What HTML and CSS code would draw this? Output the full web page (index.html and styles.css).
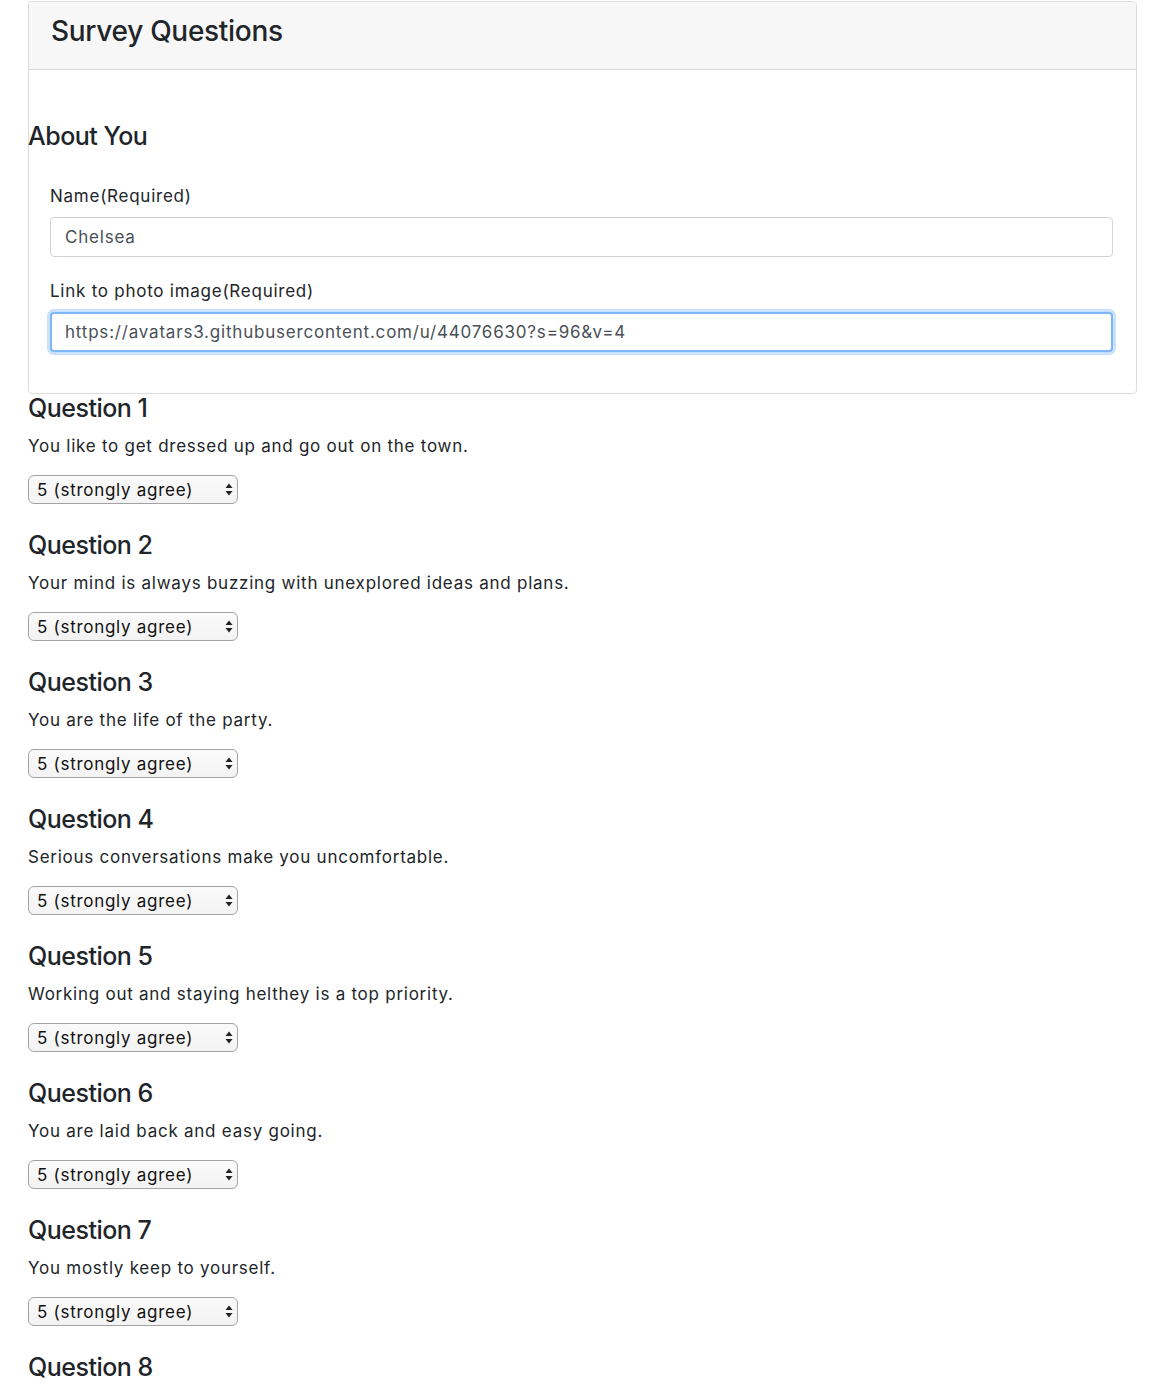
FILE: index.html
```html
<!DOCTYPE html>
<html lang="en">
<head>
<meta charset="utf-8">
<title>Survey Questions</title>
<link rel="stylesheet" href="styles.css">
</head>
<body>
<div class="page">
  <div class="card">
    <div class="card-header">
      <h3 class="card-title">Survey Questions</h3>
    </div>
    <div class="card-body">
      <h4 class="section-title">About You</h4>
      <div class="form-group">
        <label class="field-label" for="name">Name(Required)</label>
        <input class="field" id="name" type="text" value="Chelsea">
      </div>
      <div class="form-group">
        <label class="field-label" for="photo">Link to photo image(Required)</label>
        <input class="field field-focus" id="photo" type="text" value="https://avatars3.githubusercontent.com/u/44076630?s=96&amp;v=4">
      </div>
    </div>
  </div>

  <div class="question">
    <h4 class="q-title">Question 1</h4>
    <p class="q-text">You like to get dressed up and go out on the town.</p>
    <div class="q-select-row"><span class="select-wrap"><select class="q-select"><option>5 (strongly agree)</option></select><svg class="select-arrows" width="8" height="13" viewBox="0 0 8 13"><path d="M4 0.5 L7.5 5 L0.5 5 Z M4 12.5 L7.5 8 L0.5 8 Z" fill="#222"/></svg></span></div>
  </div>
  <div class="question">
    <h4 class="q-title">Question 2</h4>
    <p class="q-text">Your mind is always buzzing with unexplored ideas and plans.</p>
    <div class="q-select-row"><span class="select-wrap"><select class="q-select"><option>5 (strongly agree)</option></select><svg class="select-arrows" width="8" height="13" viewBox="0 0 8 13"><path d="M4 0.5 L7.5 5 L0.5 5 Z M4 12.5 L7.5 8 L0.5 8 Z" fill="#222"/></svg></span></div>
  </div>
  <div class="question">
    <h4 class="q-title">Question 3</h4>
    <p class="q-text">You are the life of the party.</p>
    <div class="q-select-row"><span class="select-wrap"><select class="q-select"><option>5 (strongly agree)</option></select><svg class="select-arrows" width="8" height="13" viewBox="0 0 8 13"><path d="M4 0.5 L7.5 5 L0.5 5 Z M4 12.5 L7.5 8 L0.5 8 Z" fill="#222"/></svg></span></div>
  </div>
  <div class="question">
    <h4 class="q-title">Question 4</h4>
    <p class="q-text">Serious conversations make you uncomfortable.</p>
    <div class="q-select-row"><span class="select-wrap"><select class="q-select"><option>5 (strongly agree)</option></select><svg class="select-arrows" width="8" height="13" viewBox="0 0 8 13"><path d="M4 0.5 L7.5 5 L0.5 5 Z M4 12.5 L7.5 8 L0.5 8 Z" fill="#222"/></svg></span></div>
  </div>
  <div class="question">
    <h4 class="q-title">Question 5</h4>
    <p class="q-text">Working out and staying helthey is a top priority.</p>
    <div class="q-select-row"><span class="select-wrap"><select class="q-select"><option>5 (strongly agree)</option></select><svg class="select-arrows" width="8" height="13" viewBox="0 0 8 13"><path d="M4 0.5 L7.5 5 L0.5 5 Z M4 12.5 L7.5 8 L0.5 8 Z" fill="#222"/></svg></span></div>
  </div>
  <div class="question">
    <h4 class="q-title">Question 6</h4>
    <p class="q-text">You are laid back and easy going.</p>
    <div class="q-select-row"><span class="select-wrap"><select class="q-select"><option>5 (strongly agree)</option></select><svg class="select-arrows" width="8" height="13" viewBox="0 0 8 13"><path d="M4 0.5 L7.5 5 L0.5 5 Z M4 12.5 L7.5 8 L0.5 8 Z" fill="#222"/></svg></span></div>
  </div>
  <div class="question">
    <h4 class="q-title">Question 7</h4>
    <p class="q-text">You mostly keep to yourself.</p>
    <div class="q-select-row"><span class="select-wrap"><select class="q-select"><option>5 (strongly agree)</option></select><svg class="select-arrows" width="8" height="13" viewBox="0 0 8 13"><path d="M4 0.5 L7.5 5 L0.5 5 Z M4 12.5 L7.5 8 L0.5 8 Z" fill="#222"/></svg></span></div>
  </div>
  <div class="question">
    <h4 class="q-title">Question 8</h4>
  </div>
</div>
</body>
</html>
```

FILE: styles.css
```css
html, body {
  margin: 0;
  padding: 0;
  background: #fff;
}

body {
  font-family: Inter, "Liberation Sans", Arial, sans-serif;
  font-size: 17px;
  line-height: 25px;
  color: #212529;
}

.page {
  width: 1109px;
  padding: 1px 0 0 28px;
  height: 1383px;
  overflow: hidden;
}

.card {
  border: 1px solid #dcdcdc;
  border-radius: 4px;
  background: #fff;
}

.card-header {
  background: #f7f7f7;
  border-bottom: 1px solid #d6d6d6;
  border-radius: 3px 3px 0 0;
  padding: 12px 22px 0;
  height: 55px;
}

.card-title {
  margin: 0;
  font-size: 28px;
  line-height: 34px;
  font-weight: 500;
  letter-spacing: -0.3px;
}

.card-body {
  padding: 52px 23px 19px 21px;
}

.section-title {
  margin: 0 0 33px -22px;
  font-size: 25px;
  line-height: 29px;
  font-weight: 500;
  letter-spacing: -0.5px;
}

.form-group {
  margin-bottom: 22px;
}

.field-label {
  display: block;
  margin-bottom: 9px;
  font-size: 17px;
  line-height: 24px;
  letter-spacing: 0.75px;
}

.field {
  display: block;
  box-sizing: border-box;
  width: 100%;
  height: 40px;
  padding: 0 14px;
  font-family: Inter, "Liberation Sans", Arial, sans-serif;
  font-size: 17px;
  letter-spacing: 0.8px;
  color: #495057;
  background: #fff;
  border: 1px solid #ced4da;
  border-radius: 4px;
  outline: none;
}

.field-focus {
  border: 2px solid #7db7f6;
  padding: 0 13px;
  box-shadow: 0 0 0 3px #c9e1fc;
}

.question {
  margin: 0;
}

.q-title {
  margin: 0 0 12px;
  padding-top: 1px;
  font-size: 25px;
  line-height: 27px;
  font-weight: 500;
  letter-spacing: -0.5px;
}

.q-text {
  margin: 0 0 10px;
  letter-spacing: 0.75px;
}

.q-select-row {
  padding-top: 6px;
  margin-bottom: 27px;
  height: 29px;
}

.select-wrap {
  position: relative;
  display: inline-block;
}

.q-select {
  -webkit-appearance: none;
  appearance: none;
  box-sizing: border-box;
  width: 210px;
  height: 29px;
  padding: 0 0 0 8px;
  font-family: Inter, "Liberation Sans", Arial, sans-serif;
  font-size: 17px;
  letter-spacing: 0.72px;
  color: #111;
  background: linear-gradient(#fafafa, #f3f3f3);
  border: 1.5px solid #a3a3a3;
  border-radius: 6px;
  outline: none;
  display: block;
}

.select-arrows {
  position: absolute;
  right: 5px;
  top: 8px;
}
```
